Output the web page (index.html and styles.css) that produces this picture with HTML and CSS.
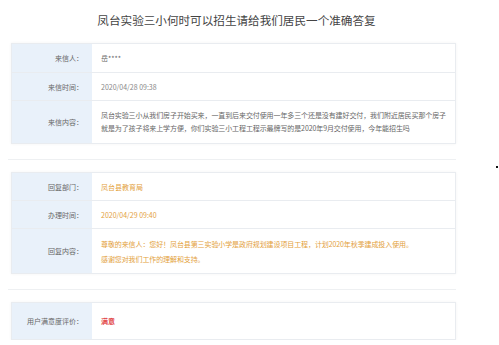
FILE: index.html
```html
<!DOCTYPE html>
<html lang="zh-CN">
<head>
    <meta charset="UTF-8">
    <meta name="viewport" content="width=device-width, initial-scale=1.0">
    <title>凤台实验三小何时可以招生</title>
    <link rel="stylesheet" href="styles.css">
</head>
<body>
    <div class="page">
        <h1 class="title">凤台实验三小何时可以招生请给我们居民一个准确答复</h1>

        <div class="info">
            <div class="row h29">
                <div class="label">来信人：</div>
                <div class="value">岳****</div>
            </div>
            <div class="row h28">
                <div class="label">来信时间：</div>
                <div class="value date">2020/04/28 09:38</div>
            </div>
            <div class="row h43">
                <div class="label">来信内容：</div>
                <div class="value text">凤台实验三小从我们房子开始买来，一直到后来交付使用一年多三个还是没有建好交付，我们附近居民买那个房子就是为了孩子将来上学方便，你们实验三小工程工程示最牌写的是2020年9月交付使用，今年能招生吗</div>
            </div>
        </div>

        <div class="divider"></div>

        <div class="info reply">
            <div class="row h28">
                <div class="label">回复部门：</div>
                <div class="value">凤台县教育局</div>
            </div>
            <div class="row h28">
                <div class="label">办理时间：</div>
                <div class="value date">2020/04/29 09:40</div>
            </div>
            <div class="row h45">
                <div class="label">回复内容：</div>
                <div class="value text">尊敬的来信人：您好！凤台县第三实验小学是政府规划建设项目工程，计划2020年秋季建成投入使用。<br>感谢您对我们工作的理解和支持。</div>
            </div>
        </div>

        <div class="divider"></div>

        <div class="info">
            <div class="row h37">
                <div class="label">用户满意度评价：</div>
                <div class="value rating">满意</div>
            </div>
        </div>
    </div>
    <span class="dot"></span>
</body>
</html>
```

FILE: styles.css
```css
body {
    margin: 0;
    background: #ffffff;
    font-family: "Noto Sans CJK SC", "Noto Sans", sans-serif;
    color: #555;
}

.page {
    width: 445px;
    margin-left: 11px;
}

.title {
    margin: 0;
    height: 43px;
    line-height: 40px;
    font-size: 11.6px;
    font-weight: 400;
    color: #444;
    text-align: center;
    padding-left: 6px;
}

.info {
    border: 1px solid #e9ecf0;
    border-bottom: none;
    box-shadow: 0 0 3px rgba(0, 0, 0, 0.05);
}

.row {
    display: flex;
    box-sizing: border-box;
    border-bottom: 1px solid #e9ecf0;
}

.h28 { height: 28px; }
.h29 { height: 29px; }
.h37 { height: 37px; }
.h43 { height: 43px; }
.h45 { height: 45px; }

.label {
    width: 80px;
    flex-shrink: 0;
    box-sizing: border-box;
    padding-right: 9px;
    background: #e9f1fa;
    display: flex;
    align-items: center;
    justify-content: flex-end;
    font-size: 7px;
    color: #666;
    white-space: nowrap;
}

.value {
    flex: 1;
    padding: 0 9px;
    display: flex;
    align-items: center;
    font-size: 7px;
    color: #666;
}

.value.text {
    display: block;
    padding-top: 8px;
    line-height: 13px;
    letter-spacing: -0.1px;
}

.reply .value.text {
    padding-top: 8px;
    line-height: 15px;
}

.date {
    color: #888;
}

.reply .value {
    color: #e3a13c;
}

.rating {
    color: #e24a4a;
    font-weight: 700;
}

.divider {
    height: 1px;
    background: #eef0f2;
    margin: 15px 0 12px -3px;
}

.dot {
    position: absolute;
    left: 496px;
    top: 166px;
    width: 2px;
    height: 2px;
    background: #111;
}
```
